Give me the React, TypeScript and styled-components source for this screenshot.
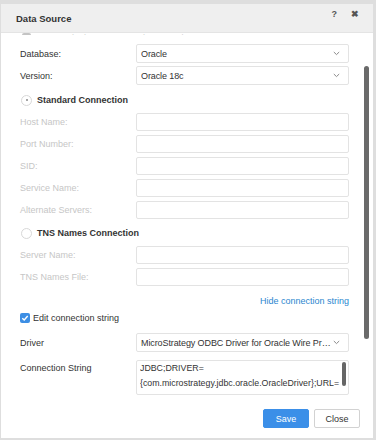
import * as React from 'react';
import styled, { createGlobalStyle } from 'styled-components';

const GlobalStyle = createGlobalStyle`
	html, body {
		margin: 0;
		padding: 0;
		background: #dedede;
		font-family: "Liberation Sans", Arial, sans-serif;
	}
`;

const Page = styled.div`
	width: 376px;
	height: 440px;
	padding: 4px 3px 2px 1px;
	box-sizing: border-box;
`;

const Dialog = styled.div`
	height: 100%;
	display: flex;
	flex-direction: column;
	background: white;
	overflow: hidden;
`;

const Header = styled.div`
	height: 28px;
	flex: none;
	display: flex;
	align-items: center;
	padding: 0 14px 0 15px;
	background: #efefef;
	border-bottom: 1px solid #e4e4e4;
`;

const Title = styled.div`
	font-size: 9.5px;
	font-weight: bold;
	color: #333;
	margin-top: 1px;
`;

const HeaderIcons = styled.div`
	margin-left: auto;
	display: flex;
	gap: 14px;
	align-items: center;
	margin-top: -9px;
	color: #555;
	font-size: 9px;
	font-weight: bold;
`;

const ScrollArea = styled.div`
	flex: 1;
	display: flex;
	min-height: 0;
`;

const Content = styled.div`
	flex: 1;
	overflow: hidden;
	padding: 0 15px 0 19px;
`;

const Track = styled.div`
	width: 8px;
	flex: none;
	padding: 33px 1px 0 0;
`;

const Thumb = styled.div`
	width: 5px;
	height: 273px;
	border-radius: 3px;
	background: #6a6a6a;
`;

const CutRow = styled.div`
	height: 2px;
	overflow: hidden;
	display: flex;
	align-items: flex-end;
	gap: 6px;
	padding-left: 2px;
	margin-bottom: 9px;
`;

const CutBox = styled.div`
	width: 9px;
	height: 9px;
	margin-bottom: -7px;
	background: #c4c4c4;
	border-radius: 2px;
`;

const CutText = styled.div`
	font-size: 9px;
	color: #c4c4c4;
	margin-bottom: -8px;
	letter-spacing: 1px;
`;

const Row = styled.div<{ $h?: number; $gap?: number }>`
	display: flex;
	align-items: center;
	height: ${(p) => p.$h ?? 19}px;
	margin-bottom: ${(p) => p.$gap ?? 3}px;
`;

const Label = styled.div<{ $disabled?: boolean }>`
	width: 116px;
	flex: none;
	font-size: 9px;
	color: ${(p) => (p.$disabled ? '#c6c6c6' : '#333')};
`;

const Field = styled.div`
	flex: 1;
	height: 100%;
	box-sizing: border-box;
	border: 1px solid #e3e3e3;
	border-radius: 2px;
	background: white;
	display: flex;
	align-items: center;
	padding: 0 8px 0 4px;
	font-size: 9px;
	color: #333;
	white-space: nowrap;
	overflow: hidden;
`;

const FieldText = styled.span`
	flex: 1;
	overflow: hidden;
	text-overflow: ellipsis;
	padding-right: 1px;
	letter-spacing: -0.1px;
`;

const RadioRow = styled.div<{ $top?: number }>`
	display: flex;
	align-items: center;
	gap: 5px;
	height: 14px;
	margin: ${(p) => p.$top ?? 8}px 0 6px 1px;
	font-size: 9px;
	font-weight: bold;
	color: #333;
`;

const Radio = styled.div<{ $checked?: boolean }>`
	width: 9px;
	height: 9px;
	border-radius: 50%;
	border: 1px solid #d8d8d8;
	display: flex;
	align-items: center;
	justify-content: center;
	&::after {
		content: '';
		width: 2px;
		height: 2px;
		border-radius: 50%;
		background: ${(p) => (p.$checked ? '#888' : 'transparent')};
	}
`;

const LinkRow = styled.div`
	display: flex;
	align-items: center;
	justify-content: flex-end;
	margin: 8px 0 4px;
	font-size: 9px;
	color: #2b87cf;
	height: 13px;
`;

const CheckRow = styled.div`
	display: flex;
	align-items: center;
	gap: 3px;
	height: 14px;
	margin-bottom: 8px;
	font-size: 9px;
	color: #333;
`;

const CheckBox = styled.div`
	width: 10px;
	height: 10px;
	border-radius: 2px;
	background: #3d8ee4;
	display: flex;
	align-items: center;
	justify-content: center;
`;

const TopRow = styled(Row)`
	align-items: flex-start;
	margin-top: 8px;
`;

const LabelTop = styled(Label)`
	padding-top: 3px;
`;

const TextArea = styled.div`
	flex: 1;
	height: 100%;
	box-sizing: border-box;
	border: 1px solid #e3e3e3;
	border-radius: 2px;
	display: flex;
	padding: 0 2px 0 3px;
	font-size: 8.8px;
	line-height: 15px;
	color: #333;
	overflow: hidden;
`;

const AreaText = styled.div`
	flex: 1;
	white-space: nowrap;
	overflow: hidden;
`;

const AreaThumb = styled.div`
	width: 4px;
	height: 24px;
	margin-top: 1px;
	border-radius: 2px;
	background: #666;
	flex: none;
`;

const Footer = styled.div`
	flex: none;
	display: flex;
	justify-content: flex-end;
	gap: 5px;
	padding: 4px 13px 10px 0;
`;

const Button = styled.button<{ $primary?: boolean }>`
	width: 46px;
	height: 19px;
	border-radius: 2px;
	font-family: "Liberation Sans", Arial, sans-serif;
	font-size: 9px;
	padding: 0;
	border: 1px solid ${(p) => (p.$primary ? '#3b8fe8' : '#d2d2d2')};
	background: ${(p) => (p.$primary ? '#3b8fe8' : 'white')};
	color: ${(p) => (p.$primary ? 'white' : '#333')};
`;

const Chevron = () => (
	<svg width="7" height="5" viewBox="0 0 7 5">
		<path d="M0.8 1 L3.5 3.6 L6.2 1" fill="none" stroke="#8a8a8a" strokeWidth="1" />
	</svg>
);

const Select = ({ value }: { value: string }) => (
	<Field>
		<FieldText>{value}</FieldText>
		<Chevron />
	</Field>
);

const standardFields = ['Host Name:', 'Port Number:', 'SID:', 'Service Name:', 'Alternate Servers:'];
const tnsFields = ['Server Name:', 'TNS Names File:'];

export default function App() {
	return (
		<Page>
			<GlobalStyle />
			<Dialog>
				<Header>
					<Title>Data Source</Title>
					<HeaderIcons>
						<span>?</span>
						<span>✖</span>
					</HeaderIcons>
				</Header>
				<ScrollArea>
					<Content>
						<CutRow>
							<CutBox />
							<CutText>Use Existing Connection Settings</CutText>
						</CutRow>
						<Row>
							<Label>Database:</Label>
							<Select value="Oracle" />
						</Row>
						<Row>
							<Label>Version:</Label>
							<Select value="Oracle 18c" />
						</Row>
						<RadioRow>
							<Radio $checked />
							Standard Connection
						</RadioRow>
						{standardFields.map((f) => (
							<Row key={f} $h={18} $gap={4}>
								<Label $disabled>{f}</Label>
								<Field />
							</Row>
						))}
						<RadioRow $top={7}>
							<Radio />
							TNS Names Connection
						</RadioRow>
						{tnsFields.map((f) => (
							<Row key={f} $h={18} $gap={4}>
								<Label $disabled>{f}</Label>
								<Field />
							</Row>
						))}
						<LinkRow>Hide connection string</LinkRow>
						<CheckRow>
							<CheckBox>
								<svg width="8" height="8" viewBox="0 0 8 8">
									<path d="M1.3 4.2 L3.2 6 L6.7 2" fill="none" stroke="white" strokeWidth="1.4" />
								</svg>
							</CheckBox>
							Edit connection string
						</CheckRow>
						<Row>
							<Label>Driver</Label>
							<Select value="MicroStrategy ODBC Driver for Oracle Wire Protocol" />
						</Row>
						<TopRow $h={35}>
							<LabelTop>Connection String</LabelTop>
							<TextArea>
								<AreaText>
									JDBC;DRIVER=
									<br />
									{'{com.microstrategy.jdbc.oracle.OracleDriver};URL='}
								</AreaText>
								<AreaThumb />
							</TextArea>
						</TopRow>
					</Content>
					<Track>
						<Thumb />
					</Track>
				</ScrollArea>
				<Footer>
					<Button $primary>Save</Button>
					<Button>Close</Button>
				</Footer>
			</Dialog>
		</Page>
	);
}
